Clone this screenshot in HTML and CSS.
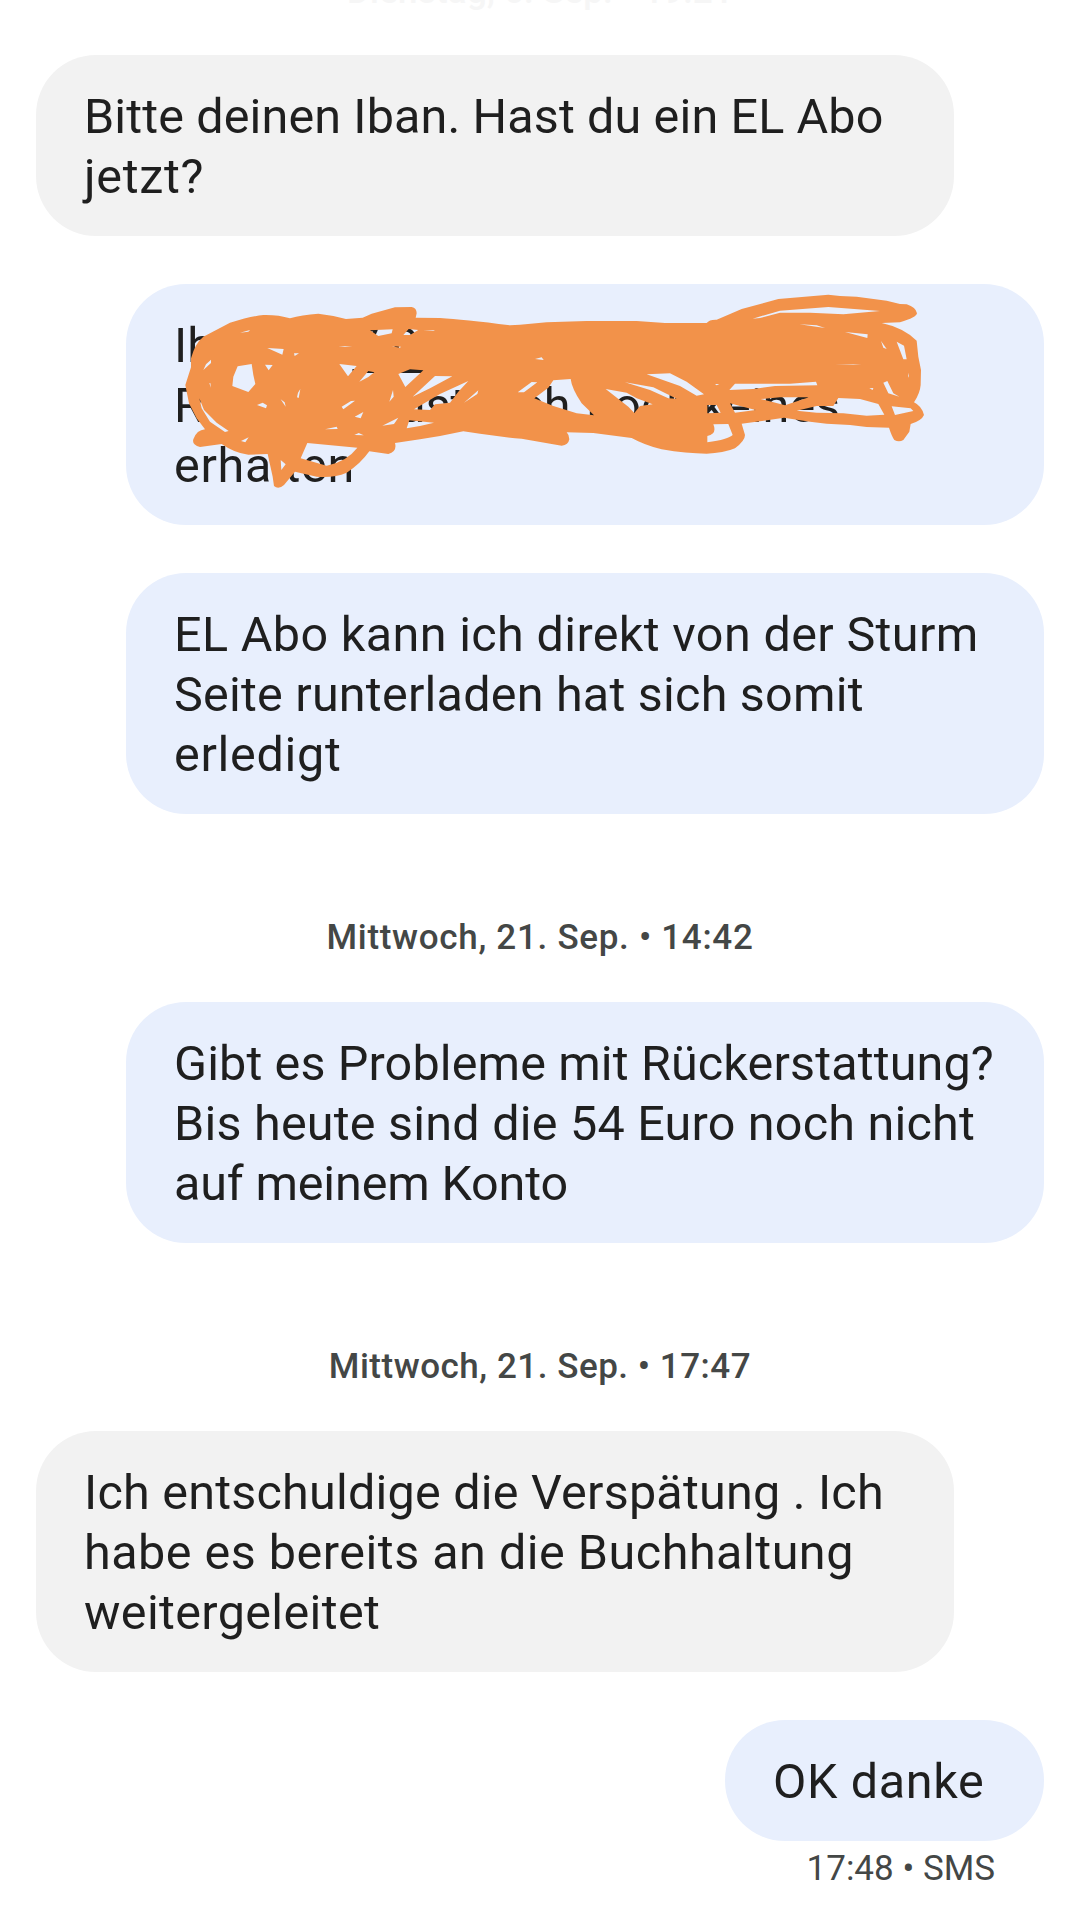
FILE: index.html
```html
<!DOCTYPE html>
<html lang="de">
<head>
    <meta charset="UTF-8">
    <meta name="viewport" content="width=device-width, initial-scale=1.0">
    <title>Nachrichten</title>
    <link rel="stylesheet" href="styles.css">
</head>
<body>
    <main class="chat">
        <div class="date date-old">Dienstag, 6. Sep. • 19:21</div>

        <div class="bubble in">
            <span class="line s4">Bitte deinen Iban. Hast du ein EL Abo</span>
            <span class="line s9">jetzt?</span>
        </div>

        <div class="bubble out">
            <span class="line">Ib <span class="iban">7&nbsp;0&nbsp;&nbsp;</span></span>
            <span class="line">R<span class="w w1">.</span><span class="w w2">ust</span><span class="w w3">ch</span><span class="w w4">noch</span><span class="w w5">keines</span></span>
            <span class="line s10">erhalten</span>
            <svg class="scribble" viewBox="0 0 2790 750" width="930" height="250">
                <path fill-rule="evenodd" d="M196,315 L213,262 L213,235 Q225,190 250,170 L330,128 Q395,108 430,105 Q475,104 510,115 Q545,104 595,101 Q640,106 678,117 L728,113 L755,101 L825,82 L875,81 Q890,84 890,100 L887,113 L960,114 Q1030,118 1170,136 L1200,134 L1280,127 L1400,123 L1550,123 L1635,129 L1760,129 Q1768,118 1790,119 L1865,87 L1975,57 L2125,44 L2160,48 L2210,50 L2300,62 L2340,72 L2360,73 Q2388,82 2391,100 Q2390,112 2340,127 L2285,129 Q2350,143 2390,182 L2395,230 L2403,270 L2402,315 Q2400,340 2382,367 Q2405,378 2412,405 Q2405,422 2372,432 L2368,455 L2350,480 Q2337,488 2323,480 Q2315,468 2307,443 L2240,441 L2190,435 L2120,431 L2070,425 L1992,413 L1920,424 L1865,431 L1875,465 Q1875,482 1845,505 Q1810,520 1760,521 Q1700,521 1625,508 Q1575,496 1535,474 L1420,459 L1340,457 Q1348,465 1348,478 Q1345,495 1325,497 L1205,476 L1185,475 L1080,461 L1030,454 L960,468 L900,478 L885,480 L825,489 Q832,515 805,522 L748,514 Q720,553 680,578 Q640,595 590,590 L525,575 L492,615 Q475,630 462,618 L458,590 L443,522 L385,524 Q345,520 305,492 L240,501 Q215,495 220,478 Q230,450 255,448 L230,415 L207,370 Z
                    M340,290 L353,259 L395,252 L400,285 L406,312 L385,336 L337,318 Z
                    M442,204 L491,207 L487,224 Z
                    M522,220 L537,220 L524,228 Z
                    M435,254 L458,255 L446,271 Z
                    M250,270 L258,253 L273,239 L273,249 Z
                    M268,310 L271,309 L273,323 Z
                    M360,158 L390,150 L385,155 Z
                    M238,355 L252,390 L290,428 L326,453 L315,456 L270,425 L245,385 Z
                    M363,483 L386,472 L376,487 Z
                    M411,375 L428,368 L441,376 L438,385 Z
                    M482,358 L494,367 L497,380 Z
                    M541,327 L536,354 L531,352 L534,338 Z
                    M658,252 L710,258 L684,289 Z
                    M718,305 L745,273 L763,277 L745,291 Z
                    M665,380 L693,363 L705,362 L670,388 Z
                    M704,410 L730,396 L722,415 Z
                    M615,448 L650,440 L653,447 Z
                    M703,465 L716,459 L731,466 Z
                    M787,437 L835,413 L822,432 Z
                    M808,365 L819,330 L821,350 Z
                    M750,151 L818,148 L815,160 L775,168 Z
                    M850,165 L866,147 L895,150 L870,165 Z
                    M890,150 L945,151 L940,153 Z
                    M655,199 L697,199 L675,201 Z
                    M815,199 L843,200 L840,203 Z
                    M835,282 L870,268 L910,271 L856,321 Z
                    M878,350 L945,288 L997,289 L930,325 Z
                    M882,388 L960,342 L1045,303 L1015,335 L990,368 L945,373 L930,390 Z
                    M868,421 L942,428 L900,438 L860,445 Z
                    M1032,368 L1075,331 L1072,342 Z
                    M1193,337 L1235,306 L1252,307 L1212,337 Z
                    M1245,237 L1265,232 L1271,240 Z
                    M1243,355 L1285,323 L1300,301 L1352,297 Q1355,325 1385,370 L1422,406 L1370,400 L1300,378 Z
                    M1457,327 L1520,338 L1550,355 L1598,373 L1560,378 L1543,399 L1525,380 Z
                    M1515,307 L1600,322 L1670,356 L1645,355 L1590,330 Z
                    M1580,283 L1650,280 L1700,305 L1752,343 L1730,347 L1680,318 Z
                    M1828,330 L1845,311 L2010,311 L2088,305 L2092,316 L1965,318 L1900,327 Z
                    M1785,312 L1798,312 L1790,316 Z
                    M1762,375 L1790,375 L1802,398 L1762,400 Z
                    M1830,370 L1860,378 L1907,390 L1845,398 Z
                    M1922,357 L1980,352 L2067,352 L1995,376 Z
                    M2030,392 L2090,378 L2140,378 L2155,354 L2220,357 L2275,372 L2293,404 L2240,407 L2170,400 L2090,398 Z
                    M2315,379 L2372,385 L2380,393 L2325,405 Z
                    M2290,308 L2302,303 L2320,340 L2338,350 L2305,340 Z
                    M2330,185 L2352,197 L2360,238 L2350,238 Z
                    M2283,183 L2300,207 L2290,203 Z
                    M2365,278 L2367,293 L2364,288 Z
                    M2248,325 L2260,324 L2258,330 Z
                    M2175,156 L2243,163 L2242,174 Z
                    M2038,133 L2090,136 L2115,144 Z
                    M2145,255 L2225,253 L2200,255 Z
                    M1898,116 L1980,92 L2125,81 L2280,93 L2170,103 L2070,98 L1980,98 L1920,114 Z
                    M1762,468 Q1792,462 1780,433 L1825,432 L1838,465 Q1825,478 1762,487 Z
                    M542,535 L562,489 L712,503 Q680,545 620,557 Z
                    M482,540 L497,553 L484,570 Z"/>
            </svg>
        </div>

        <div class="bubble out">
            <span class="line s6">EL Abo kann ich direkt von der Sturm</span>
            <span class="line s5">Seite runterladen hat sich somit</span>
            <span class="line s9">erledigt</span>
        </div>

        <div class="date">Mittwoch, 21. Sep. • 14:42</div>

        <div class="bubble out">
            <span class="line s4">Gibt es Probleme mit Rückerstattung?</span>
            <span class="line s5">Bis heute sind die 54 Euro noch nicht</span>
            <span class="line s1">auf meinem Konto</span>
        </div>

        <div class="date date-narrow">Mittwoch, 21. Sep. • 17:47</div>

        <div class="bubble in">
            <span class="line s5">Ich entschuldige die Verspätung . Ich</span>
            <span class="line s8">habe es bereits an die Buchhaltung</span>
            <span class="line s6">weitergeleitet</span>
        </div>

        <div class="bubble out small">
            <span class="line s7">OK danke</span>
        </div>
        <div class="meta">17:48 • SMS</div>
    </main>
</body>
</html>
```

FILE: styles.css
```css
* {
    margin: 0;
    padding: 0;
    box-sizing: border-box;
}

body {
    font-family: Roboto, 'Noto Sans', sans-serif;
    background: #fff;
    color: #1f1f1f;
    overflow: hidden;
}

.chat {
    height: 1929px;
    padding: 0 36px;
    display: flex;
    flex-direction: column;
    overflow: hidden;
}

.bubble {
    position: relative;
    width: 918px;
    margin-bottom: 48px;
    padding: 32px 48px 29px;
    border-radius: 60px;
    font-size: 48.5px;
    line-height: 60px;
    flex-shrink: 0;
}

.in {
    align-self: flex-start;
    background: #f2f2f2;
}

.out {
    align-self: flex-end;
    background: #e8effd;
}

.small {
    width: 319px;
    margin-bottom: 0;
}

.line {
    display: block;
    height: 60px;
    white-space: nowrap;
}

/* letter spacing per line */
.s1 { letter-spacing: -0.15px; }
.s4 { letter-spacing: 0.13px; }
.s5 { letter-spacing: 0.22px; }
.s6 { letter-spacing: 0.36px; }
.s7 { letter-spacing: 0.65px; }
.s8 { letter-spacing: 0.5px; }
.s9 { letter-spacing: 0.7px; }
.s10 { letter-spacing: 0.7px; }

.date {
    height: 60px;
    margin: 46px 0 34px;
    text-align: center;
    font-size: 35px;
    font-weight: 500;
    line-height: 60px;
    letter-spacing: 0.7px;
    color: #444746;
    flex-shrink: 0;
}

.date-narrow {
    letter-spacing: 0.52px;
}

.date-old {
    height: 51px;
    margin: -38px 0 42px;
    color: #f6f6f6;
    letter-spacing: 0.2px;
}

.meta {
    padding-right: 49px;
    text-align: right;
    font-size: 35px;
    line-height: 56px;
    color: #444746;
}

.iban {
    margin-left: 126px;
    text-decoration: underline;
    text-decoration-thickness: 4px;
    text-underline-offset: 7px;
}

.w {
    display: inline-block;
}

.w1 { margin-left: 55px; }
.w2 { margin-left: 127px; }
.w3 { margin-left: 52px; }
.w4 { margin-left: 16px; }
.w5 { margin-left: 8px; }

.scribble {
    position: absolute;
    left: -6px;
    top: -4px;
    fill: #f2924a;
}
```
